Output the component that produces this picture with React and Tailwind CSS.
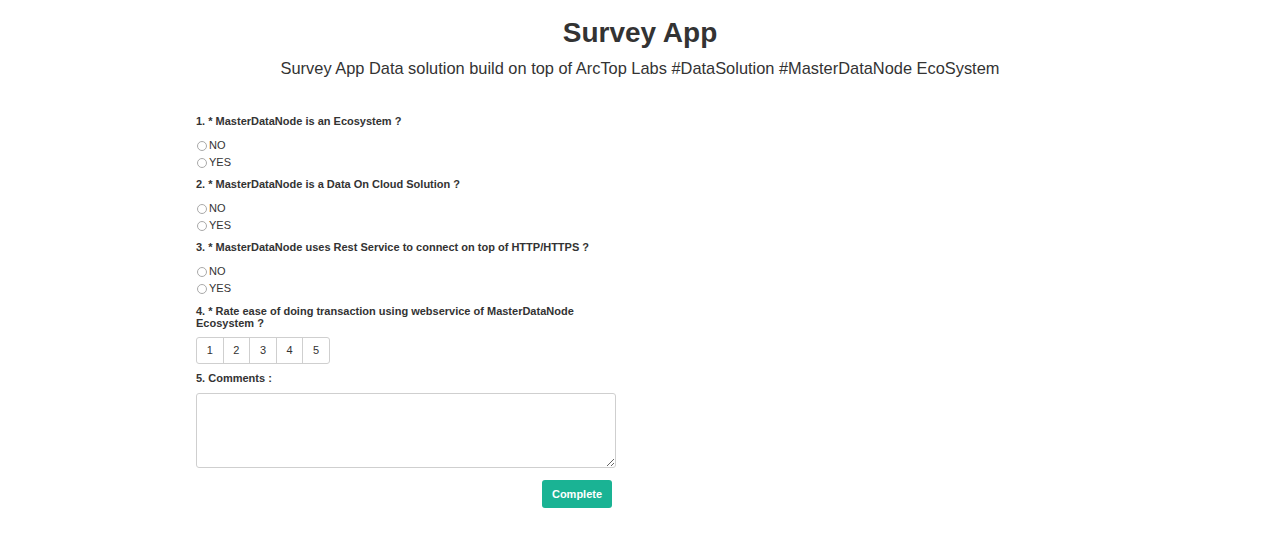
import React from "react";

const font = { fontFamily: '"Liberation Sans", Arial, sans-serif' };

function Radio({ label }) {
  return (
    <label className="flex items-center h-[17px] text-[11px] text-[#333]">
      <span className="w-[10px] h-[10px] rounded-full border border-[#a9a9a9] bg-white mr-[2px] ml-[1px]" />
      {label}
    </label>
  );
}

function Question({ title, children }) {
  return (
    <div className="mb-[6px]">
      <div className="text-[11px] font-bold text-[#333] leading-[13px] mb-[9px] pt-[1px]">{title}</div>
      {children}
    </div>
  );
}

export default function App() {
  return (
    <div className="w-[1280px] h-[555px] bg-white text-[#333]" style={font}>
      <div className="text-center pt-[16px]">
        <h1 className="text-[28px] font-bold leading-[34px] text-[#333]">Survey App</h1>
        <p className="text-[16.4px] leading-[20px] mt-[8px] text-[#333]">
          Survey App Data solution build on top of ArcTop Labs #DataSolution #MasterDataNode EcoSystem
        </p>
      </div>
      <div className="ml-[196px] w-[420px] mt-[36px]">
        <Question title="1. * MasterDataNode is an Ecosystem ?">
          <Radio label="NO" />
          <Radio label="YES" />
        </Question>
        <Question title="2. * MasterDataNode is a Data On Cloud Solution ?">
          <Radio label="NO" />
          <Radio label="YES" />
        </Question>
        <Question title="3. * MasterDataNode uses Rest Service to connect on top of HTTP/HTTPS ?">
          <Radio label="NO" />
          <Radio label="YES" />
        </Question>
        <div className="mb-[8px]">
          <div className="text-[11px] font-bold text-[#333] leading-[12px] pr-[40px] pt-[2px]">
            4. * Rate ease of doing transaction using webservice of MasterDataNode Ecosystem ?
          </div>
          <div className="flex mt-[8px]">
            {["1", "2", "3", "4", "5"].map((n, i) => (
              <div
                key={n}
                className={`w-[27.6px] h-[27px] flex items-center justify-center text-[11px] text-[#333] border border-[#cfcfcf] ${i === 0 ? "rounded-l-[3px] text-[#2a7fc0]" : "-ml-px"} ${i === 4 ? "rounded-r-[3px]" : ""}`}
              >
                {n}
              </div>
            ))}
          </div>
        </div>
        <div className="text-[11px] font-bold text-[#333] leading-[13px]">5. Comments :</div>
        <textarea className="block mt-[8px] w-[420px] h-[75px] border border-[#cfcfcf] rounded-[3px] resize-y" />
        <div className="flex justify-end pr-[4px] mt-[12px]">
          <button className="w-[70px] h-[28px] rounded-[3px] bg-[#1ab394] text-white text-[11px] font-bold">
            Complete
          </button>
        </div>
      </div>
    </div>
  );
}
